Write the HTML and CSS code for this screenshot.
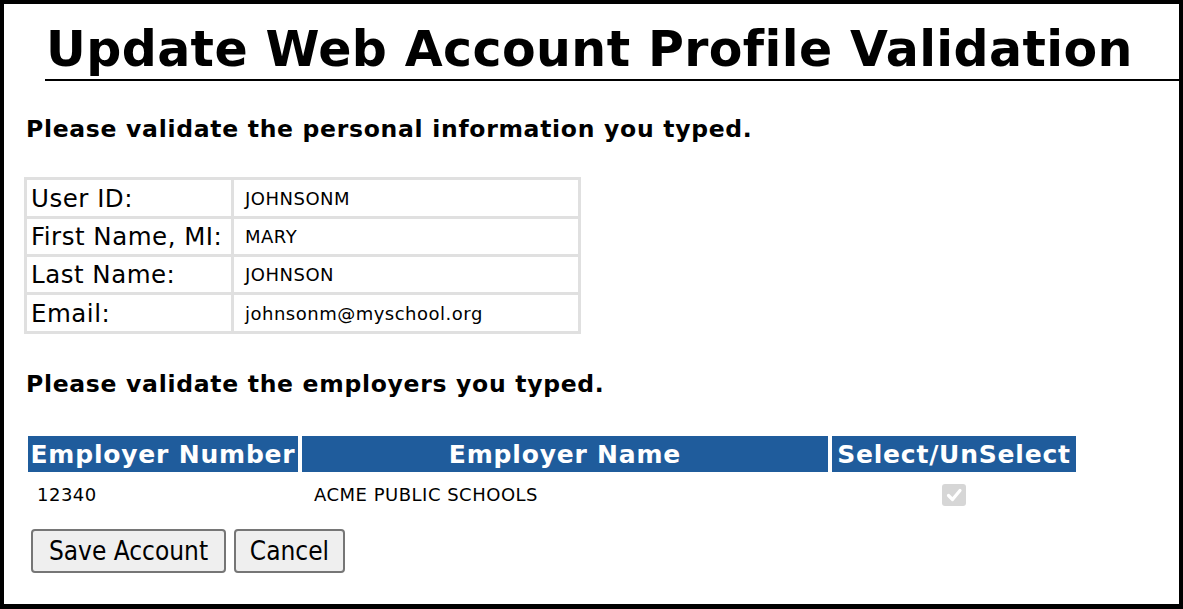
FILE: index.html
```html
<!DOCTYPE html>
<html>
<head>
<meta charset="utf-8">
<link rel="stylesheet" href="styles.css">
</head>
<body>
<div class="frame">
  <h1 class="title">Update Web Account Profile Validation</h1>
  <h2 class="section">Please validate the personal information you typed.</h2>
  <table class="info">
    <tr class="tall"><td class="lbl">User ID:</td><td class="val">JOHNSONM</td></tr>
    <tr><td class="lbl">First Name, MI:</td><td class="val">MARY</td></tr>
    <tr><td class="lbl">Last Name:</td><td class="val">JOHNSON</td></tr>
    <tr class="tall"><td class="lbl">Email:</td><td class="val">johnsonm@myschool.org</td></tr>
  </table>
  <h2 class="section section2">Please validate the employers you typed.</h2>
  <table class="emp">
    <tr>
      <th class="c1">Employer Number</th>
      <th class="c2">Employer Name</th>
      <th class="c3">Select/UnSelect</th>
    </tr>
    <tr>
      <td class="c1">12340</td>
      <td class="c2">ACME PUBLIC SCHOOLS</td>
      <td class="c3"><span class="chk"><svg viewBox="0 0 24 22" width="24" height="22"><path d="M6.5 11.5 L10.5 15.5 L18 6.5" fill="none" stroke="#fff" stroke-width="3.2" stroke-linecap="round" stroke-linejoin="round"/></svg></span></td>
    </tr>
  </table>
  <div class="actions">
    <button class="btn btn-save">Save Account</button>
    <button class="btn btn-cancel">Cancel</button>
  </div>
</div>
</body>
</html>
```
FILE: styles.css
```css
html, body {
  margin: 0;
  padding: 0;
  background: #fff;
}
body {
  font-family: "DejaVu Sans", "Liberation Sans", sans-serif;
  color: #000;
}
.frame {
  box-sizing: border-box;
  width: 1183px;
  height: 609px;
  border: 4px solid #000;
  border-bottom-width: 5px;
  overflow: hidden;
}
.title {
  margin: 0 0 0 41px;
  padding: 17px 0 0 1px;
  height: 58px;
  font-size: 49px;
  font-weight: bold;
  line-height: 58px;
  letter-spacing: 0.4px;
  border-bottom: 2px solid #000;
  white-space: nowrap;
}
.section {
  margin: 34px 0 0 22px;
  font-size: 23.5px;
  font-weight: bold;
  line-height: 28px;
  letter-spacing: 0.7px;
}
.section2 {
  margin-top: 36px;
}
.info {
  margin: 34px 0 0 20px;
  background: #e0e0e0;
  border-spacing: 3px;
  border-collapse: separate;
}
.info td {
  background: #fff;
  height: 35px;
  padding: 0;
  vertical-align: middle;
  white-space: nowrap;
}
.info .tall td {
  height: 36px;
}
.info .lbl {
  width: 200px;
  padding-left: 4px;
  font-size: 24.5px;
  letter-spacing: 0.5px;
}
.info .val {
  width: 333px;
  padding-left: 11px;
  font-size: 18px;
  letter-spacing: 0.5px;
}
.emp {
  margin: 38px 0 0 20px;
  border-spacing: 4px 0;
  border-collapse: separate;
}
.emp th {
  background: #1f5c9c;
  color: #fff;
  font-size: 25px;
  font-weight: bold;
  letter-spacing: 0.8px;
  height: 36px;
  padding: 0;
  text-align: center;
  white-space: nowrap;
}
.emp th.c1 { width: 270px; }
.emp th.c2 { width: 526px; }
.emp th.c3 { width: 244px; }
.emp td {
  font-size: 18px;
  letter-spacing: 0.5px;
  height: 44px;
  padding: 0;
  vertical-align: middle;
}
.emp td.c1 { padding-left: 9px; }
.emp td.c2 { padding-left: 12px; }
.emp td.c3 { text-align: center; }
.chk {
  display: inline-block;
  width: 24px;
  height: 22px;
  background: #d6d6d6;
  border-radius: 3px;
  vertical-align: middle;
}
.chk svg { display: block; }
.actions {
  margin: 13px 0 0 27px;
  display: flex;
  gap: 8px;
}
.btn {
  box-sizing: border-box;
  font-family: "DejaVu Sans Condensed", "DejaVu Sans", sans-serif;
  font-stretch: condensed;
  font-size: 26px;
  height: 44px;
  padding: 0;
  background: #efefef;
  border: 2px solid #767676;
  border-radius: 4px;
  color: #000;
  text-align: center;
}
.btn-save { width: 195px; }
.btn-cancel { width: 111px; }
```
